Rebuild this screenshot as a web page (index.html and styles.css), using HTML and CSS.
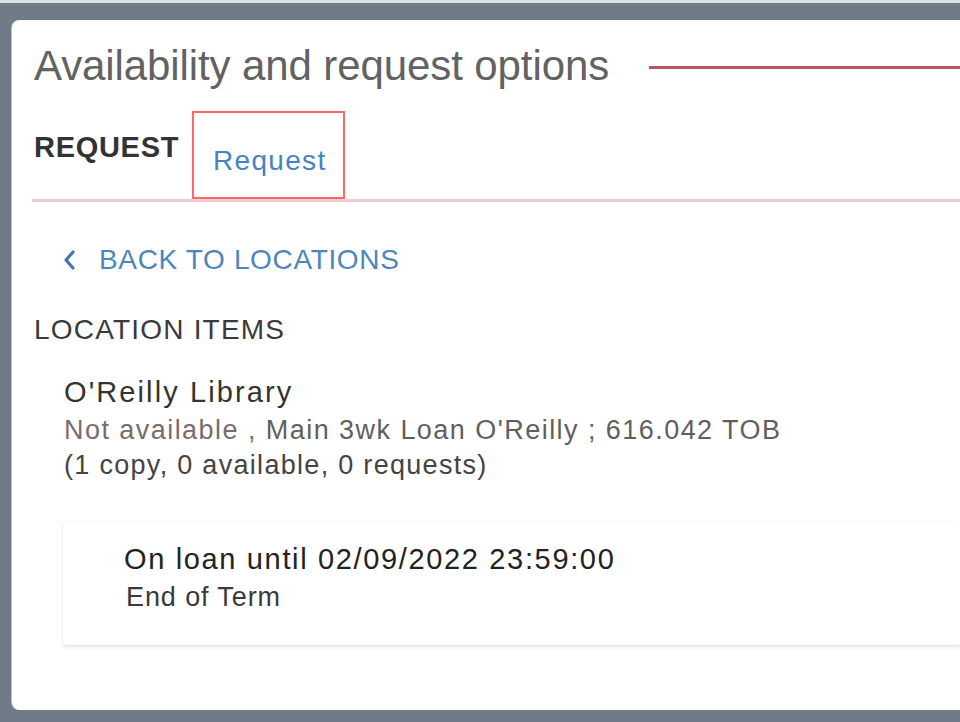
FILE: index.html
```html
<!DOCTYPE html>
<html lang="en">
<head>
<meta charset="utf-8">
<title>Availability and request options</title>
<link rel="stylesheet" href="styles.css">
</head>
<body>
<div class="topstrip"></div>
<div class="frame">
  <section class="card">
    <div class="title-row">
      <h2 class="title">Availability and request options</h2>
      <span class="title-rule"></span>
    </div>
    <div class="tab-row">
      <span class="tab-label">REQUEST</span>
      <a class="tab-link" href="#">Request</a>
    </div>
    <div class="divider"></div>
    <a class="back" href="#">
      <svg class="chev" width="14" height="22" viewBox="0 0 14 22" aria-hidden="true"><polyline points="11,3 4,11 11,19" fill="none" stroke="#3f79ad" stroke-width="3.2" stroke-linecap="round" stroke-linejoin="round"/></svg>
      <span class="back-text">BACK TO LOCATIONS</span>
    </a>
    <h3 class="section-label">LOCATION ITEMS</h3>
    <div class="location">
      <div class="loc-name">O'Reilly Library</div>
      <div class="loc-status"><span class="na">Not available ,</span> Main 3wk Loan O'Reilly ; 616.042 TOB</div>
      <div class="loc-count">(1 copy, 0 available, 0 requests)</div>
    </div>
    <div class="item-card">
      <div class="item-line">On loan until 02/09/2022 23:59:00</div>
      <div class="item-sub">End of Term</div>
    </div>
  </section>
</div>
</body>
</html>
```
FILE: styles.css
```css
html, body {
  margin: 0;
  padding: 0;
  height: 100%;
  overflow: hidden;
}
body {
  background: #6f7c87;
  font-family: "Liberation Sans", Arial, sans-serif;
}
.topstrip {
  height: 3px;
  background: #dfe3e6;
}
.frame {
  padding: 17px 0 0 12px;
}
.card {
  background: #ffffff;
  height: 690px;
  box-sizing: border-box;
  border-radius: 8px 0 0 8px;
  padding: 22px 0 0 22px;
  box-shadow: -1px 0 0 rgba(200, 208, 214, 0.8);
}
.title-row {
  display: flex;
  align-items: center;
}
.title {
  margin: 0;
  font-size: 42px;
  line-height: 48px;
  font-weight: normal;
  color: #626262;
  letter-spacing: -0.1px;
}
.title-rule {
  flex: 1;
  height: 3px;
  background: #b85668;
  margin-left: 40px;
  margin-top: 3px;
}
.tab-row {
  display: flex;
  align-items: flex-start;
  margin-top: 21px;
}
.tab-label {
  margin-top: 19px;
  font-size: 29px;
  line-height: 34px;
  font-weight: bold;
  color: #333333;
  letter-spacing: 0.7px;
}
.tab-link {
  margin-left: 13px;
  width: 153px;
  height: 88px;
  box-sizing: border-box;
  border: 2px solid #ff6666;
  padding: 32px 0 0 19px;
  font-size: 28px;
  line-height: 32px;
  letter-spacing: 1.3px;
  color: #4584c0;
  text-decoration: none;
}
.divider {
  height: 3px;
  background: #f1cdd2;
  margin-left: -2px;
}
.back {
  display: flex;
  align-items: center;
  margin: 42px 0 0 28px;
  text-decoration: none;
  color: #4d86ba;
}
.chev {
  display: block;
  margin-right: 23px;
}
.back-text {
  font-size: 28px;
  line-height: 32px;
  letter-spacing: 0.65px;
}
.section-label {
  margin: 38px 0 0 0;
  font-size: 28px;
  line-height: 32px;
  font-weight: normal;
  color: #3a3a3a;
  letter-spacing: 1.2px;
}
.location {
  margin: 30px 0 0 30px;
}
.loc-name {
  font-size: 29px;
  line-height: 32px;
  color: #333333;
  letter-spacing: 2.1px;
}
.loc-status {
  margin-top: 6px;
  font-size: 27px;
  line-height: 32px;
  color: #5f5f5f;
  letter-spacing: 1.45px;
}
.na {
  color: #7a6c6c;
}
.loc-count {
  margin-top: 3px;
  font-size: 27px;
  line-height: 32px;
  color: #444444;
  letter-spacing: 1.3px;
}
.item-card {
  margin: 40px 0 0 29px;
  padding: 22px 0 32px 61px;
  background: #ffffff;
  box-shadow: 0 2px 4px rgba(0, 0, 0, 0.10), 0 0 1px rgba(0, 0, 0, 0.08);
}
.item-line {
  font-size: 29px;
  line-height: 32px;
  color: #222222;
  letter-spacing: 1.65px;
}
.item-sub {
  margin: 6px 0 0 2px;
  font-size: 27px;
  line-height: 32px;
  color: #3a3a3a;
  letter-spacing: 0.9px;
}
```
